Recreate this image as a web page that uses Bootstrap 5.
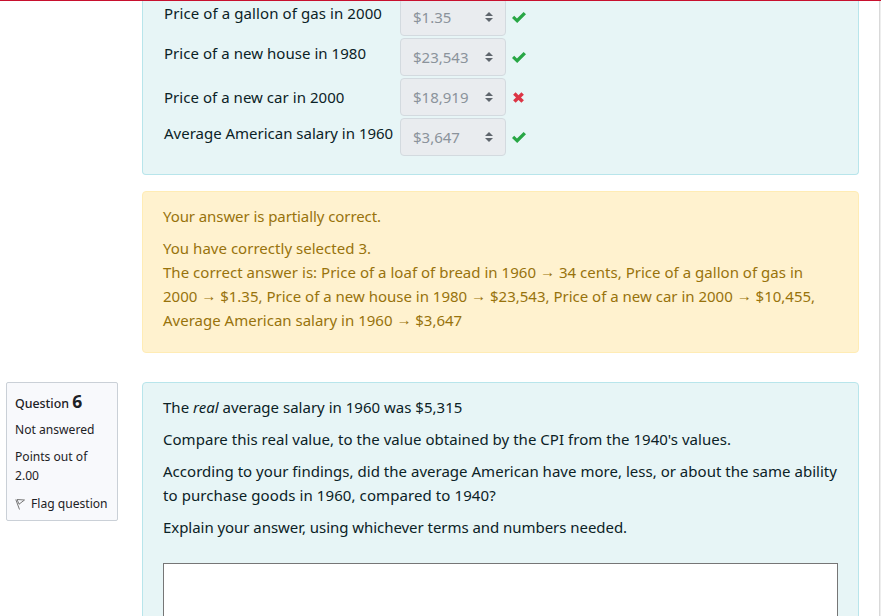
<!DOCTYPE html>
<html lang="en">
<head>
<meta charset="utf-8">
<meta name="viewport" content="width=device-width, initial-scale=1">
<title>Quiz review</title>
<link href="https://cdn.jsdelivr.net/npm/bootstrap@5.3.0/dist/css/bootstrap.min.css" rel="stylesheet">
<style>
body{font-family:"Noto Sans",sans-serif;font-size:15px;line-height:24px;color:#0b2226;height:616px;overflow:hidden;background:#fff}
.page-top{height:1px;background:#c8102e}
.page-main{width:879px;height:615px;padding:0 20px 0 6px;background:#fff;overflow:hidden}
.page-edge{width:2px;height:615px;background:#eee;border-left:1px solid #d9d9d9}
.side-col{width:112px;margin-right:24px}
.q-panel{background:#e7f5f6;border:1px solid #b8e5eb;border-radius:4px;padding:0 20px}
.q-first{height:174px;border-top:0;border-top-left-radius:0;border-top-right-radius:0;overflow:hidden;padding-left:21px}
.match-rows{margin-top:-4px}
.match-row{height:40px}
.match-label{width:236px;padding-top:4px}
.match-label.low{padding-top:8px}
.pick{width:106px;height:38px;margin-top:1px;padding:0 12px;background:#e9ecef;border:1px solid #d3dadf;border-radius:4px;color:#8b939b}
.pick span{margin-top:-1px}
.mark-icon{margin:15px 0 0 6px}
.feedback{margin-top:16px;height:162px;padding:12px 20px 0;background:#fff2cf;border:1px solid #ffecb5;border-radius:4px;color:#98730c}
.q-text p,.feedback p{margin-bottom:8px}
.arrow{line-height:1;vertical-align:1px}
.q-second{height:260px;padding-top:12px}
.essay{height:80px;margin-top:24px;background:#fff;border:1px solid #767676}
.q-row2{margin-top:29px}
.q-info{height:139px;padding:10px 8px 0;background:#f8f9fc;border:1px solid #cad0d7;border-radius:2px;font-size:12.1px;line-height:19px;color:#1d2125}
.q-info h3{font-size:12.4px;line-height:20px;margin:0 0 6px;font-weight:500}
.q-info h3 b{font-size:17.5px;line-height:1}
.q-info p{margin:0 0 8px}
.flag-line{margin-top:9px}
.flag-line svg{margin-right:5px}
.ln{white-space:nowrap}
.w1{letter-spacing:.095px}.w2{letter-spacing:.045px}.w3{letter-spacing:.04px}.w4{letter-spacing:-.01px}
.w5{letter-spacing:-.08px}.w6{letter-spacing:.025px}.w7{letter-spacing:.024px}.w8{letter-spacing:0}
.w9{letter-spacing:.01px}.w10{letter-spacing:.033px}.w11{letter-spacing:.09px}.w12{letter-spacing:-.045px}.w13{letter-spacing:.021px}
</style>
</head>
<body>
<svg class="d-none">
  <symbol id="check" viewBox="0 0 14 11"><path fill="#28a745" d="M0 6 2.2 3.8 5 6.4 11.6 0 14 2.2 5.2 11Z"/></symbol>
  <symbol id="cross" viewBox="0 0 12 11"><path fill="#dc3545" d="M3.6 .3 6.5 3.2 9.4 .3 11.9 2.7 9 5.5 11.9 8.3 9.4 10.7 6.5 7.9 3.6 10.7 1.1 8.3 4 5.5 1.1 2.7Z"/></symbol>
  <symbol id="sort" viewBox="0 0 8 10"><path fill="#5f666d" d="M4 0 8 4H0ZM0 6H8L4 10Z"/></symbol>
</svg>
<div class="page-top"></div>
<div class="d-flex">
<main class="page-main flex-shrink-0">
  <div class="d-flex">
    <div class="side-col flex-shrink-0"></div>
    <div class="flex-grow-1">
      <div class="q-panel q-first">
        <div class="match-rows">
          <div class="match-row d-flex align-items-start"><div class="match-label ln w1">Price of a gallon of gas in 2000</div><div class="pick d-flex align-items-center justify-content-between"><span>$1.35</span><svg width="8" height="10"><use href="#sort"/></svg></div><svg class="mark-icon" width="14" height="11"><use href="#check"/></svg></div>
          <div class="match-row d-flex align-items-start"><div class="match-label ln w2">Price of a new house in 1980</div><div class="pick d-flex align-items-center justify-content-between"><span>$23,543</span><svg width="8" height="10"><use href="#sort"/></svg></div><svg class="mark-icon" width="14" height="11"><use href="#check"/></svg></div>
          <div class="match-row d-flex align-items-start"><div class="match-label low ln w3">Price of a new car in 2000</div><div class="pick d-flex align-items-center justify-content-between"><span>$18,919</span><svg width="8" height="10"><use href="#sort"/></svg></div><svg class="mark-icon" width="12" height="11"><use href="#cross"/></svg></div>
          <div class="match-row d-flex align-items-start"><div class="match-label ln w4">Average American salary in 1960</div><div class="pick d-flex align-items-center justify-content-between"><span>$3,647</span><svg width="8" height="10"><use href="#sort"/></svg></div><svg class="mark-icon" width="14" height="11"><use href="#check"/></svg></div>
        </div>
      </div>
      <div class="feedback">
        <p class="ln w5">Your answer is partially correct.</p>
        <div class="ln"><span class="w6">You have correctly selected 3.</span><br>
        <span class="w7">The correct answer is: Price of a loaf of bread in 1960 <span class="arrow">→</span> 34 cents, Price of a gallon of gas in</span><br>
        <span class="w8">2000 <span class="arrow">→</span> $1.35, Price of a new house in 1980 <span class="arrow">→</span> $23,543, Price of a new car in 2000 <span class="arrow">→</span> $10,455,</span><br>
        <span>Average American salary in 1960 <span class="arrow">→</span> $3,647</span></div>
      </div>
    </div>
  </div>
  <div class="d-flex align-items-start q-row2">
    <aside class="side-col flex-shrink-0">
      <div class="q-info ln">
        <h3>Question <b>6</b></h3>
        <p>Not answered</p>
        <p>Points out of<br>2.00</p>
        <div class="flag-line d-flex align-items-center"><svg width="11" height="12" viewBox="0 0 11 12" fill="none" stroke="#777" stroke-width="1"><path d="M.8 1.5 4.5 11.5M1.8 1.5 9.5 2 4 6.2M2.2 2 4.2 6.3"/></svg><span>Flag question</span></div>
      </div>
    </aside>
    <div class="q-panel q-second q-text flex-grow-1 ln">
      <p class="w9">The <i>real</i> average salary in 1960 was $5,315</p>
      <p class="w10">Compare this real value, to the value obtained by the CPI from the 1940's values.</p>
      <p><span class="w13">According to your findings, did the average American have more, less, or about the same ability</span><br><span class="w11">to purchase goods in 1960, compared to 1940?</span></p>
      <p class="w12">Explain your answer, using whichever terms and numbers needed.</p>
      <div class="essay"></div>
    </div>
  </div>
</main>
<div class="page-edge flex-shrink-0"></div>
</div>
</body>
</html>
